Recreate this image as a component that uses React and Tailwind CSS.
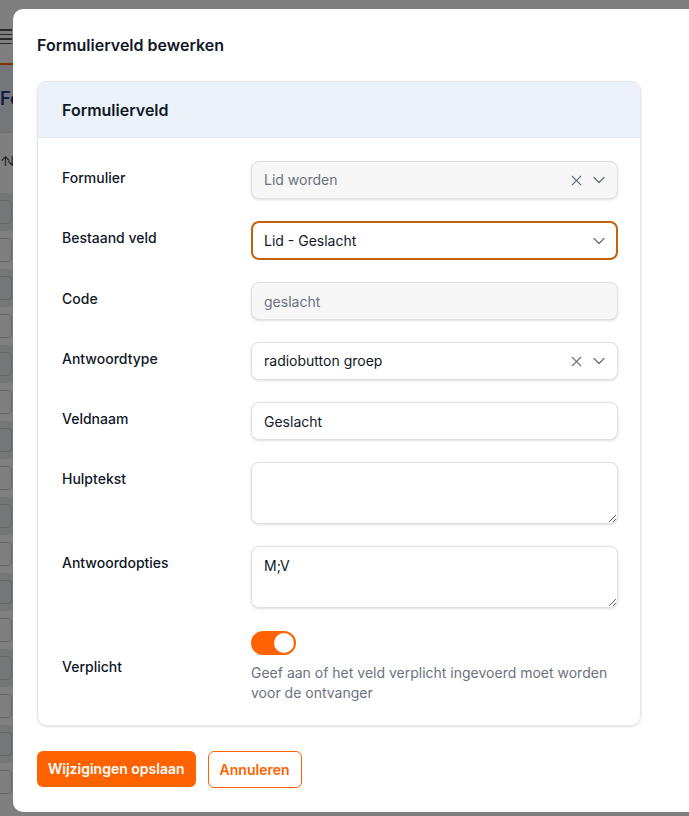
import { X, ChevronDown } from "lucide-react";

const font = { fontFamily: "Inter, 'Noto Sans', sans-serif" };

const Label = ({ children, center }) => (
  <div className={`text-sm font-medium leading-5 text-[#111827] ${center ? "self-center" : "pt-[7px]"}`}>
    {children}
  </div>
);

const SelectBox = ({ value, disabled, focused, clearable }) => (
  <div
    className={`flex items-center rounded-lg text-sm ${
      focused
        ? "h-[39px] border-2 border-[#c4620c] bg-white pl-[11px] pr-[7px] text-[#111827]"
        : disabled
        ? "h-[38px] border border-[#e0e0e0] bg-[#f7f7f7] pl-3 pr-2 text-[#6b7280] shadow-sm"
        : "h-[38px] border border-[#e0e0e0] bg-white pl-3 pr-2 text-[#111827] shadow-sm"
    }`}
  >
    <span className="flex-1">{value}</span>
    {clearable && <X size={17} strokeWidth={1.6} className="mr-1 text-[#6b7280]" />}
    <ChevronDown size={20} strokeWidth={1.6} className="text-[#6b7280]" />
  </div>
);

const TextInput = ({ value, disabled }) => (
  <input
    readOnly
    defaultValue={value}
    className={`h-[38px] w-full rounded-lg border border-[#e0e0e0] px-3 text-sm shadow-sm outline-none ${
      disabled ? "bg-[#f7f7f7] text-[#6b7280]" : "bg-white text-[#111827]"
    }`}
  />
);

const Area = ({ value }) => (
  <textarea
    readOnly
    defaultValue={value}
    className="block h-[62px] w-full rounded-lg border border-[#e0e0e0] bg-white px-3 pt-[9px] text-sm text-[#111827] shadow-sm outline-none"
  />
);

// the page behind the dialog, only a thin strip of it shows on the left
const BackgroundPage = () => (
  <div className="absolute inset-y-0 left-0 w-[14px] overflow-hidden bg-white">
    <div className="flex h-[65px] items-end border-b-2 border-[#ff6a00] pb-[19px]">
      <div className="flex w-[12px] flex-col gap-[3px]">
        <div className="h-[1.5px] bg-[#555]" />
        <div className="h-[1.5px] bg-[#555]" />
        <div className="h-[1.5px] bg-[#555]" />
        <div className="h-[1.5px] bg-[#555]" />
      </div>
    </div>
    <div className="flex h-[68px] items-center border-b border-[#dfe3e8] bg-[#e9edf3] text-lg font-semibold text-[#1e3a8a]">
      Fo
    </div>
    <div className="flex h-[60px] items-center whitespace-nowrap pb-1 text-[13px] leading-none tracking-[-4px] text-[#333]">
      ↑↓
    </div>
    {Array.from({ length: 16 }).map((_, i) => (
      <div key={i} className={`flex h-[38px] items-center ${i % 2 === 0 ? "bg-[#e9edf3]" : "bg-white"}`}>
        <div className="ml-[-10px] h-[24px] w-[22px] rounded border border-[#cfcfcf]" />
      </div>
    ))}
  </div>
);

export default function App() {
  return (
    <div className="relative h-[816px] w-[689px] overflow-hidden bg-white" style={font}>
      <BackgroundPage />
      <div className="absolute inset-0 bg-black/50" />
      <div className="absolute left-[13px] top-[9px] h-[803px] w-[700px] rounded-[10px] bg-white px-6 pt-6">
        <h2 className="text-base font-semibold leading-6 text-[#111827]">Formulierveld bewerken</h2>

        <div className="mt-6 w-[604px] rounded-[10px] border border-[#e3e6ea] shadow-sm">
          <div className="flex h-[56px] items-center rounded-t-[10px] border-b border-[#e3e6ea] bg-[#ebf2f9] px-6">
            <h3 className="text-base font-semibold text-[#111827]">Formulierveld</h3>
          </div>

          <div className="grid grid-cols-[189px_367px] gap-y-[22px] px-6 pb-[22px] pt-[23px]">
            <Label>Formulier</Label>
            <SelectBox value="Lid worden" disabled clearable />

            <Label>Bestaand veld</Label>
            <SelectBox value="Lid - Geslacht" focused />

            <Label>Code</Label>
            <TextInput value="geslacht" disabled />

            <Label>Antwoordtype</Label>
            <SelectBox value="radiobutton groep" clearable />

            <Label>Veldnaam</Label>
            <TextInput value="Geslacht" />

            <Label>Hulptekst</Label>
            <Area value="" />

            <Label>Antwoordopties</Label>
            <Area value="M;V" />

            <Label center>Verplicht</Label>
            <div className="pt-px">
              <div className="flex h-[24px] w-[45px] items-center justify-end rounded-full bg-[#ff6200] pr-[2px]">
                <div className="h-[20px] w-[20px] rounded-full bg-white" />
              </div>
              <p className="mt-2 text-sm leading-5 text-[#6b7280]">
                Geef aan of het veld verplicht ingevoerd moet worden voor de ontvanger
              </p>
            </div>
          </div>
        </div>

        <div className="mt-[25px] flex gap-3">
          <button className="h-[36px] rounded-md bg-[#ff6200] px-[11px] text-sm font-semibold text-white">
            Wijzigingen opslaan
          </button>
          <button className="h-[37px] rounded-md border border-[#ff6200] bg-white px-[11px] text-sm font-semibold text-[#ff6200]">
            Annuleren
          </button>
        </div>
      </div>
    </div>
  );
}
